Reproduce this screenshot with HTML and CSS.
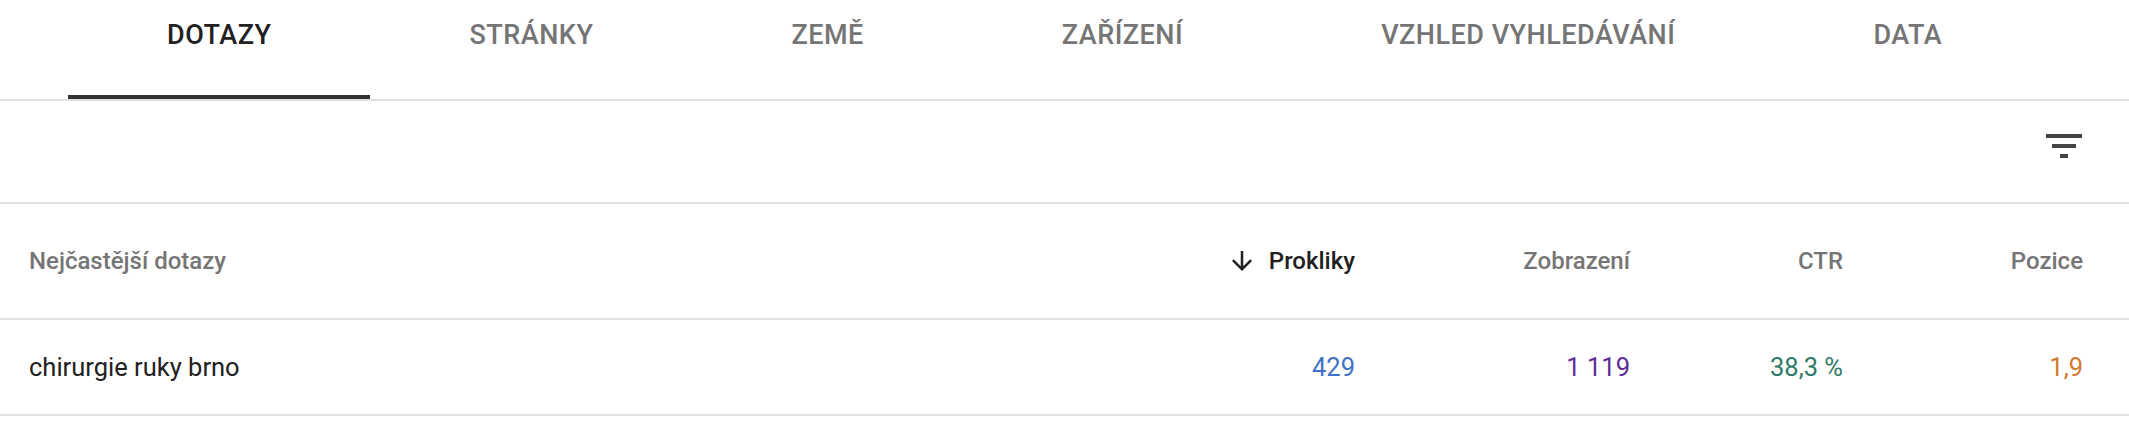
FILE: index.html
```html
<!DOCTYPE html>
<html lang="cs">
<head>
<meta charset="utf-8">
<title>Výkon – dotazy</title>
<link rel="stylesheet" href="styles.css">
</head>
<body>
<div class="page">
  <nav class="tabs">
    <div class="tab tab-active">DOTAZY</div>
    <div class="tab">STRÁNKY</div>
    <div class="tab">ZEMĚ</div>
    <div class="tab">ZAŘÍZENÍ</div>
    <div class="tab">VZHLED VYHLEDÁVÁNÍ</div>
    <div class="tab">DATA</div>
  </nav>
  <div class="toolbar">
    <button class="icon-btn" aria-label="Filtrovat řádky">
      <svg class="filter-icon" viewBox="0 0 24 24" width="48" height="48"><path d="M10 18h4v-2h-4v2zM3 6v2h18V6H3zm3 7h12v-2H6v2z"/></svg>
    </button>
  </div>
  <div class="table">
    <div class="row head">
      <div class="cell cell-query">Nejčastější dotazy</div>
      <div class="cell cell-num sorted">
        <svg class="sort-icon" viewBox="0 0 24 24" width="30" height="30"><path d="M20 12l-1.41-1.41L13 16.17V4h-2v12.17l-5.58-5.59L4 12l8 8 8-8z"/></svg>
        <span>Prokliky</span>
      </div>
      <div class="cell cell-num">Zobrazení</div>
      <div class="cell cell-num">CTR</div>
      <div class="cell cell-num">Pozice</div>
    </div>
    <div class="row data">
      <div class="cell cell-query">chirurgie ruky brno</div>
      <div class="cell cell-num v-clicks">429</div>
      <div class="cell cell-num v-impr">1 119</div>
      <div class="cell cell-num v-ctr">38,3 %</div>
      <div class="cell cell-num v-pos">1,9</div>
    </div>
  </div>
</div>
</body>
</html>
```
FILE: styles.css
```css
* { box-sizing: border-box; }
html, body {
  margin: 0;
  padding: 0;
  background: #ffffff;
}
body {
  font-family: Roboto, "Noto Sans", "Liberation Sans", sans-serif;
  color: #212121;
}
.page {
  width: 2129px;
}
.tabs {
  display: flex;
  padding-left: 68px;
  border-bottom: 2px solid #e0e0e0;
  height: 101px;
}
.tab {
  height: 99px;
  padding: 20px 99px 0;
  font-size: 27px;
  line-height: 30px;
  font-weight: 500;
  letter-spacing: 0.5px;
  color: #757575;
  white-space: nowrap;
  border-bottom: 4px solid transparent;
}
.tab-active {
  color: #212121;
  border-bottom-color: #333333;
}
.toolbar {
  height: 103px;
  display: flex;
  justify-content: flex-end;
  align-items: flex-start;
  padding: 21px 41px 0 0;
  border-bottom: 2px solid #e0e0e0;
}
.icon-btn {
  border: 0;
  padding: 0;
  margin: 0;
  background: transparent;
  width: 48px;
  height: 48px;
  display: block;
}
.filter-icon {
  display: block;
  fill: #444444;
}
.row {
  display: grid;
  grid-template-columns: 1fr 200px 275px 213px 240px;
  padding: 0 46px 0 29px;
  border-bottom: 2px solid #e0e0e0;
  font-size: 25.5px;
}
.row.head {
  height: 116px;
  font-size: 24px;
  font-weight: 500;
  color: #757575;
}
.row.data {
  height: 96px;
}
.cell {
  display: flex;
  align-items: center;
  white-space: nowrap;
}
.cell-num {
  justify-content: flex-end;
}
.sorted {
  color: #212121;
  gap: 12px;
}
.sort-icon {
  display: block;
  fill: #212121;
}
.v-clicks { color: #4073c6; }
.v-impr { color: #5e2d98; }
.v-ctr { color: #2f7a66; }
.v-pos { color: #d2792f; }
```
